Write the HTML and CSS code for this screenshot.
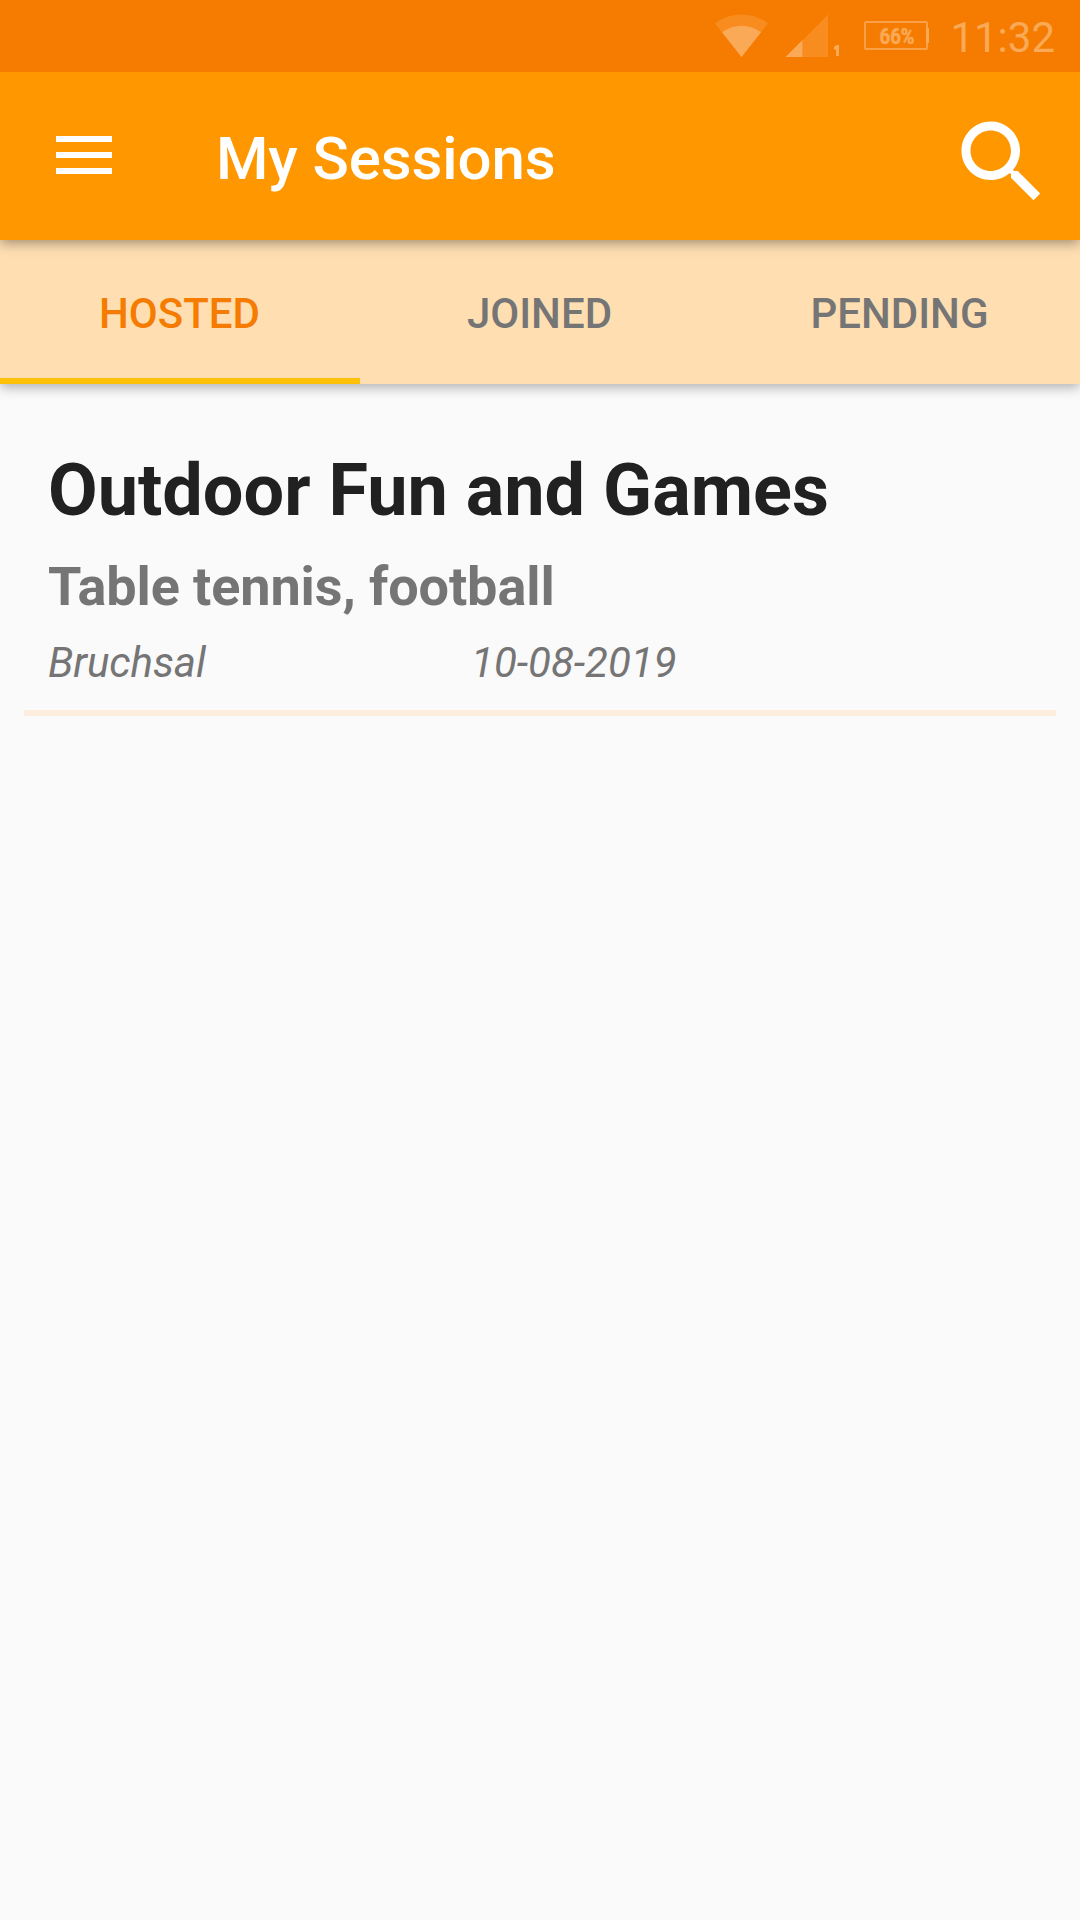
FILE: index.html
```html
<!DOCTYPE html>
<html lang="en">
<head>
<meta charset="utf-8">
<title>My Sessions</title>
<link rel="stylesheet" href="styles.css">
</head>
<body>
<div class="status-bar">
  <svg class="status-icons" viewBox="0 0 232 72" aria-hidden="true">
    <path class="faint" d="M41.500 57 15 23.500Q26.500 14.500 41.500 14.500T68 23.500Z"/>
    <path class="solid" d="M41.500 57 22 32.300Q30.500 25.700 41.500 25.700T61 32.300Z"/>
    <path class="faint" d="M102.500 40.500 128 14.500V57H102.500Z"/>
    <path class="solid" d="M85.500 57 102.500 40V57Z"/>
    <path class="solid" d="M136.500 45H139V56H136V49.500H134V47Z"/>
    <rect class="outline" x="165" y="22" width="62" height="27" rx="1"/>
    <rect class="solid" x="226" y="28" width="3" height="15"/>
    <text class="battery-level" x="179.500" y="44" textLength="35" lengthAdjust="spacingAndGlyphs">66%</text>
  </svg>
  <time class="clock">11:32</time>
</div>
<header class="app-bar">
  <button class="icon-button menu" aria-label="Menu">
    <svg width="56" height="38" viewBox="0 0 56 38"><path d="M0 0H56V6H0ZM0 16H56V22H0ZM0 32H56V38H0Z"/></svg>
  </button>
  <h1 class="app-title">My Sessions</h1>
  <button class="icon-button search" aria-label="Search">
    <svg width="108" height="108" viewBox="0 0 24 24"><path d="M15.500 14h-.79l-.28-.27C15.410 12.590 16 11.110 16 9.500 16 5.910 13.090 3 9.500 3S3 5.910 3 9.500 5.910 16 9.500 16c1.610 0 3.090-.59 4.230-1.570l.27.28v.79l5 4.990L20.490 19l-4.990-5zm-6 0C7.010 14 5 11.990 5 9.500S7.010 5 9.500 5 14 7.010 14 9.500 11.990 14 9.500 14z"/></svg>
  </button>
</header>
<nav class="tabs">
  <a class="tab active">HOSTED</a>
  <a class="tab">JOINED</a>
  <a class="tab">PENDING</a>
</nav>
<main class="sessions">
  <article class="session">
    <h2 class="session-title">Outdoor Fun and Games</h2>
    <p class="session-activities">Table tennis, football</p>
    <div class="session-meta"><span class="place">Bruchsal</span><span class="date">10-08-2019</span></div>
  </article>
</main>
</body>
</html>
```
FILE: styles.css
```css
* { box-sizing: border-box; margin: 0; padding: 0; }

body {
  width: 1080px;
  height: 1920px;
  display: flex;
  flex-direction: column;
  overflow: hidden;
  background: #fafafa;
  font-family: Roboto, sans-serif;
}

.status-bar {
  position: relative;
  z-index: 3;
  height: 72px;
  display: flex;
  justify-content: flex-end;
  align-items: center;
  padding-right: 25px;
  background: #f57c00;
  color: #faa956;
}

.status-icons { width: 232px; height: 72px; margin-right: 18px; }
.faint { fill: #f88c1f; }
.solid { fill: #faa956; }
.outline { fill: none; stroke: #faa148; stroke-width: 2; }
.battery-level { fill: #faa956; stroke: #faa956; stroke-width: .6; font-size: 22px; font-weight: 700; }
.clock { font-size: 42px; line-height: 50px; padding-top: 3px; }

.app-bar {
  position: relative;
  z-index: 2;
  height: 168px;
  display: flex;
  align-items: center;
  background: #ff9800;
  box-shadow: 0 3px 12px rgba(0, 0, 0, .38);
}

.icon-button { display: flex; border: 0; background: none; fill: #fff; }
.menu { width: 216px; padding: 0 0 2px 56px; }
.app-title { flex: 1; padding-top: 5px; color: #fff; font-size: 60px; font-weight: 500; line-height: 72px; letter-spacing: -.1px; }
.search { margin-right: 24px; padding-top: 12px; }

.tabs {
  position: relative;
  z-index: 1;
  height: 144px;
  display: grid;
  grid-template-columns: repeat(3, 1fr);
  background: #ffdfb2;
  box-shadow: 0 3px 12px rgba(0, 0, 0, .32);
}

.tab {
  display: flex;
  align-items: center;
  justify-content: center;
  padding: 9px 1px 0 0;
  border-bottom: 6px solid transparent;
  color: #757575;
  font-size: 42px;
  font-weight: 500;
}

.tab.active { color: #f57c00; border-bottom-color: #ffc107; }

.sessions { padding: 0 24px; }
.session { padding: 65px 24px 22px; border-bottom: 6px solid #fdeddc; }
.session-title { color: #212121; font-size: 72px; font-weight: 700; line-height: 84px; }
.session-activities { margin-top: 22px; color: #757575; font-size: 54px; font-weight: 700; line-height: 64px; letter-spacing: -.1px; }
.session-meta { display: grid; grid-template-columns: 423px 1fr; margin-top: 19px; color: #757575; font-size: 42px; font-style: italic; line-height: 50px; }
.place { letter-spacing: -.1px; }
```
